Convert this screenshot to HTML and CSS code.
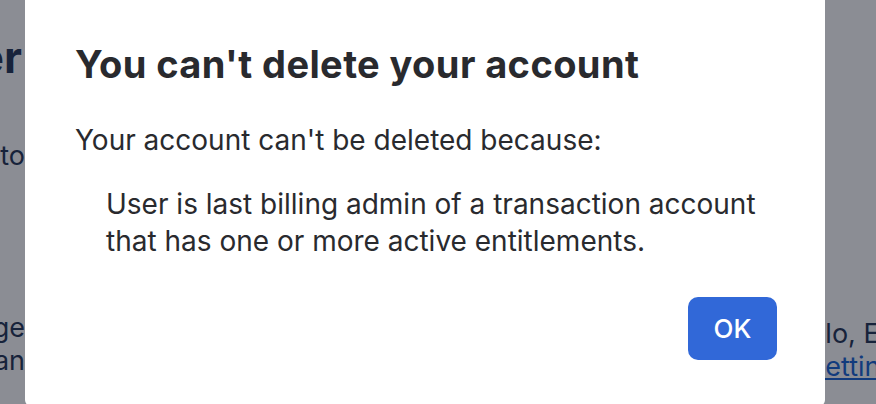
FILE: index.html
```html
<!DOCTYPE html>
<html>
<head>
<meta charset="utf-8">
<link rel="stylesheet" href="styles.css">
</head>
<body>
<div class="page">
  <div class="left-col">
    <div class="bg-heading">Account owner</div>
    <div class="bg-line bg-to">Transfer ownership to</div>
    <div class="bg-line bg-ge">Manage</div>
    <div class="bg-line bg-an">Plan</div>
  </div>
  <div class="right-col">
    <div class="bg-line bg-hello">Hello, Emma</div>
    <a class="bg-link" href="#">Settings</a>
  </div>
</div>
<div class="overlay"></div>
<div class="modal" role="dialog">
  <h1 class="modal-title">You can't delete your account</h1>
  <p class="modal-text">Your account can't be deleted because:</p>
  <ul class="reasons">
    <li>User is last billing admin of a transaction account that has one or more active entitlements.</li>
  </ul>
  <div class="modal-footer">
    <button class="btn-ok">OK</button>
  </div>
</div>
</body>
</html>
```
FILE: styles.css
```css
* { box-sizing: border-box; }
html, body { margin: 0; padding: 0; }
body {
  width: 876px;
  height: 404px;
  overflow: hidden;
  background: #ffffff;
  font-family: Inter, "Liberation Sans", sans-serif;
  color: #172b4d;
  position: relative;
}
.page {
  display: flex;
  justify-content: space-between;
  height: 404px;
  overflow: hidden;
}
.left-col {
  width: 25px;
  display: flex;
  flex-direction: column;
  align-items: flex-end;
  white-space: nowrap;
}
.bg-heading {
  font-size: 44px;
  font-weight: 700;
  line-height: 44px;
  margin-top: 35px;
  padding-right: 3px;
  color: #172b4d;
}
.bg-line {
  font-size: 27px;
  line-height: 27px;
  color: #172b4d;
}
.bg-to { margin-top: 63px; }
.bg-ge { margin-top: 145px; }
.bg-an { margin-top: 6px; }
.right-col {
  width: 93px;
  display: flex;
  flex-direction: column;
  white-space: nowrap;
}
.bg-hello { margin-top: 320px; }
.bg-link {
  margin-top: 6px;
  margin-left: 25px;
  font-size: 27px;
  line-height: 27px;
  color: #0c5bd0;
  text-decoration: underline;
}
.overlay {
  position: absolute;
  inset: 0;
  background: rgba(23, 27, 41, 0.5);
}
.modal {
  position: absolute;
  left: 25px;
  top: -20px;
  width: 800px;
  height: 426px;
  background: #ffffff;
  border-radius: 6px;
  padding: 61px 48px 46px 50px;
  display: flex;
  flex-direction: column;
  color: #292a2e;
}
.modal-title {
  margin: 0;
  font-size: 38px;
  font-weight: 700;
  line-height: 46px;
  letter-spacing: 0.4px;
}
.modal-text {
  margin: 34px 0 0;
  font-size: 28px;
  line-height: 38px;
}
.reasons {
  margin: 27px 0 0;
  padding-left: 31px;
  list-style: none;
  font-size: 28px;
  line-height: 37px;
}
.reasons li { width: 670px; }
.modal-footer {
  margin-top: auto;
  display: flex;
  justify-content: flex-end;
}
.btn-ok {
  width: 89px;
  height: 63px;
  border: none;
  border-radius: 10px;
  background: #3168d8;
  color: #ffffff;
  font-family: Inter, "Liberation Sans", sans-serif;
  font-size: 26px;
  font-weight: 500;
}
```
